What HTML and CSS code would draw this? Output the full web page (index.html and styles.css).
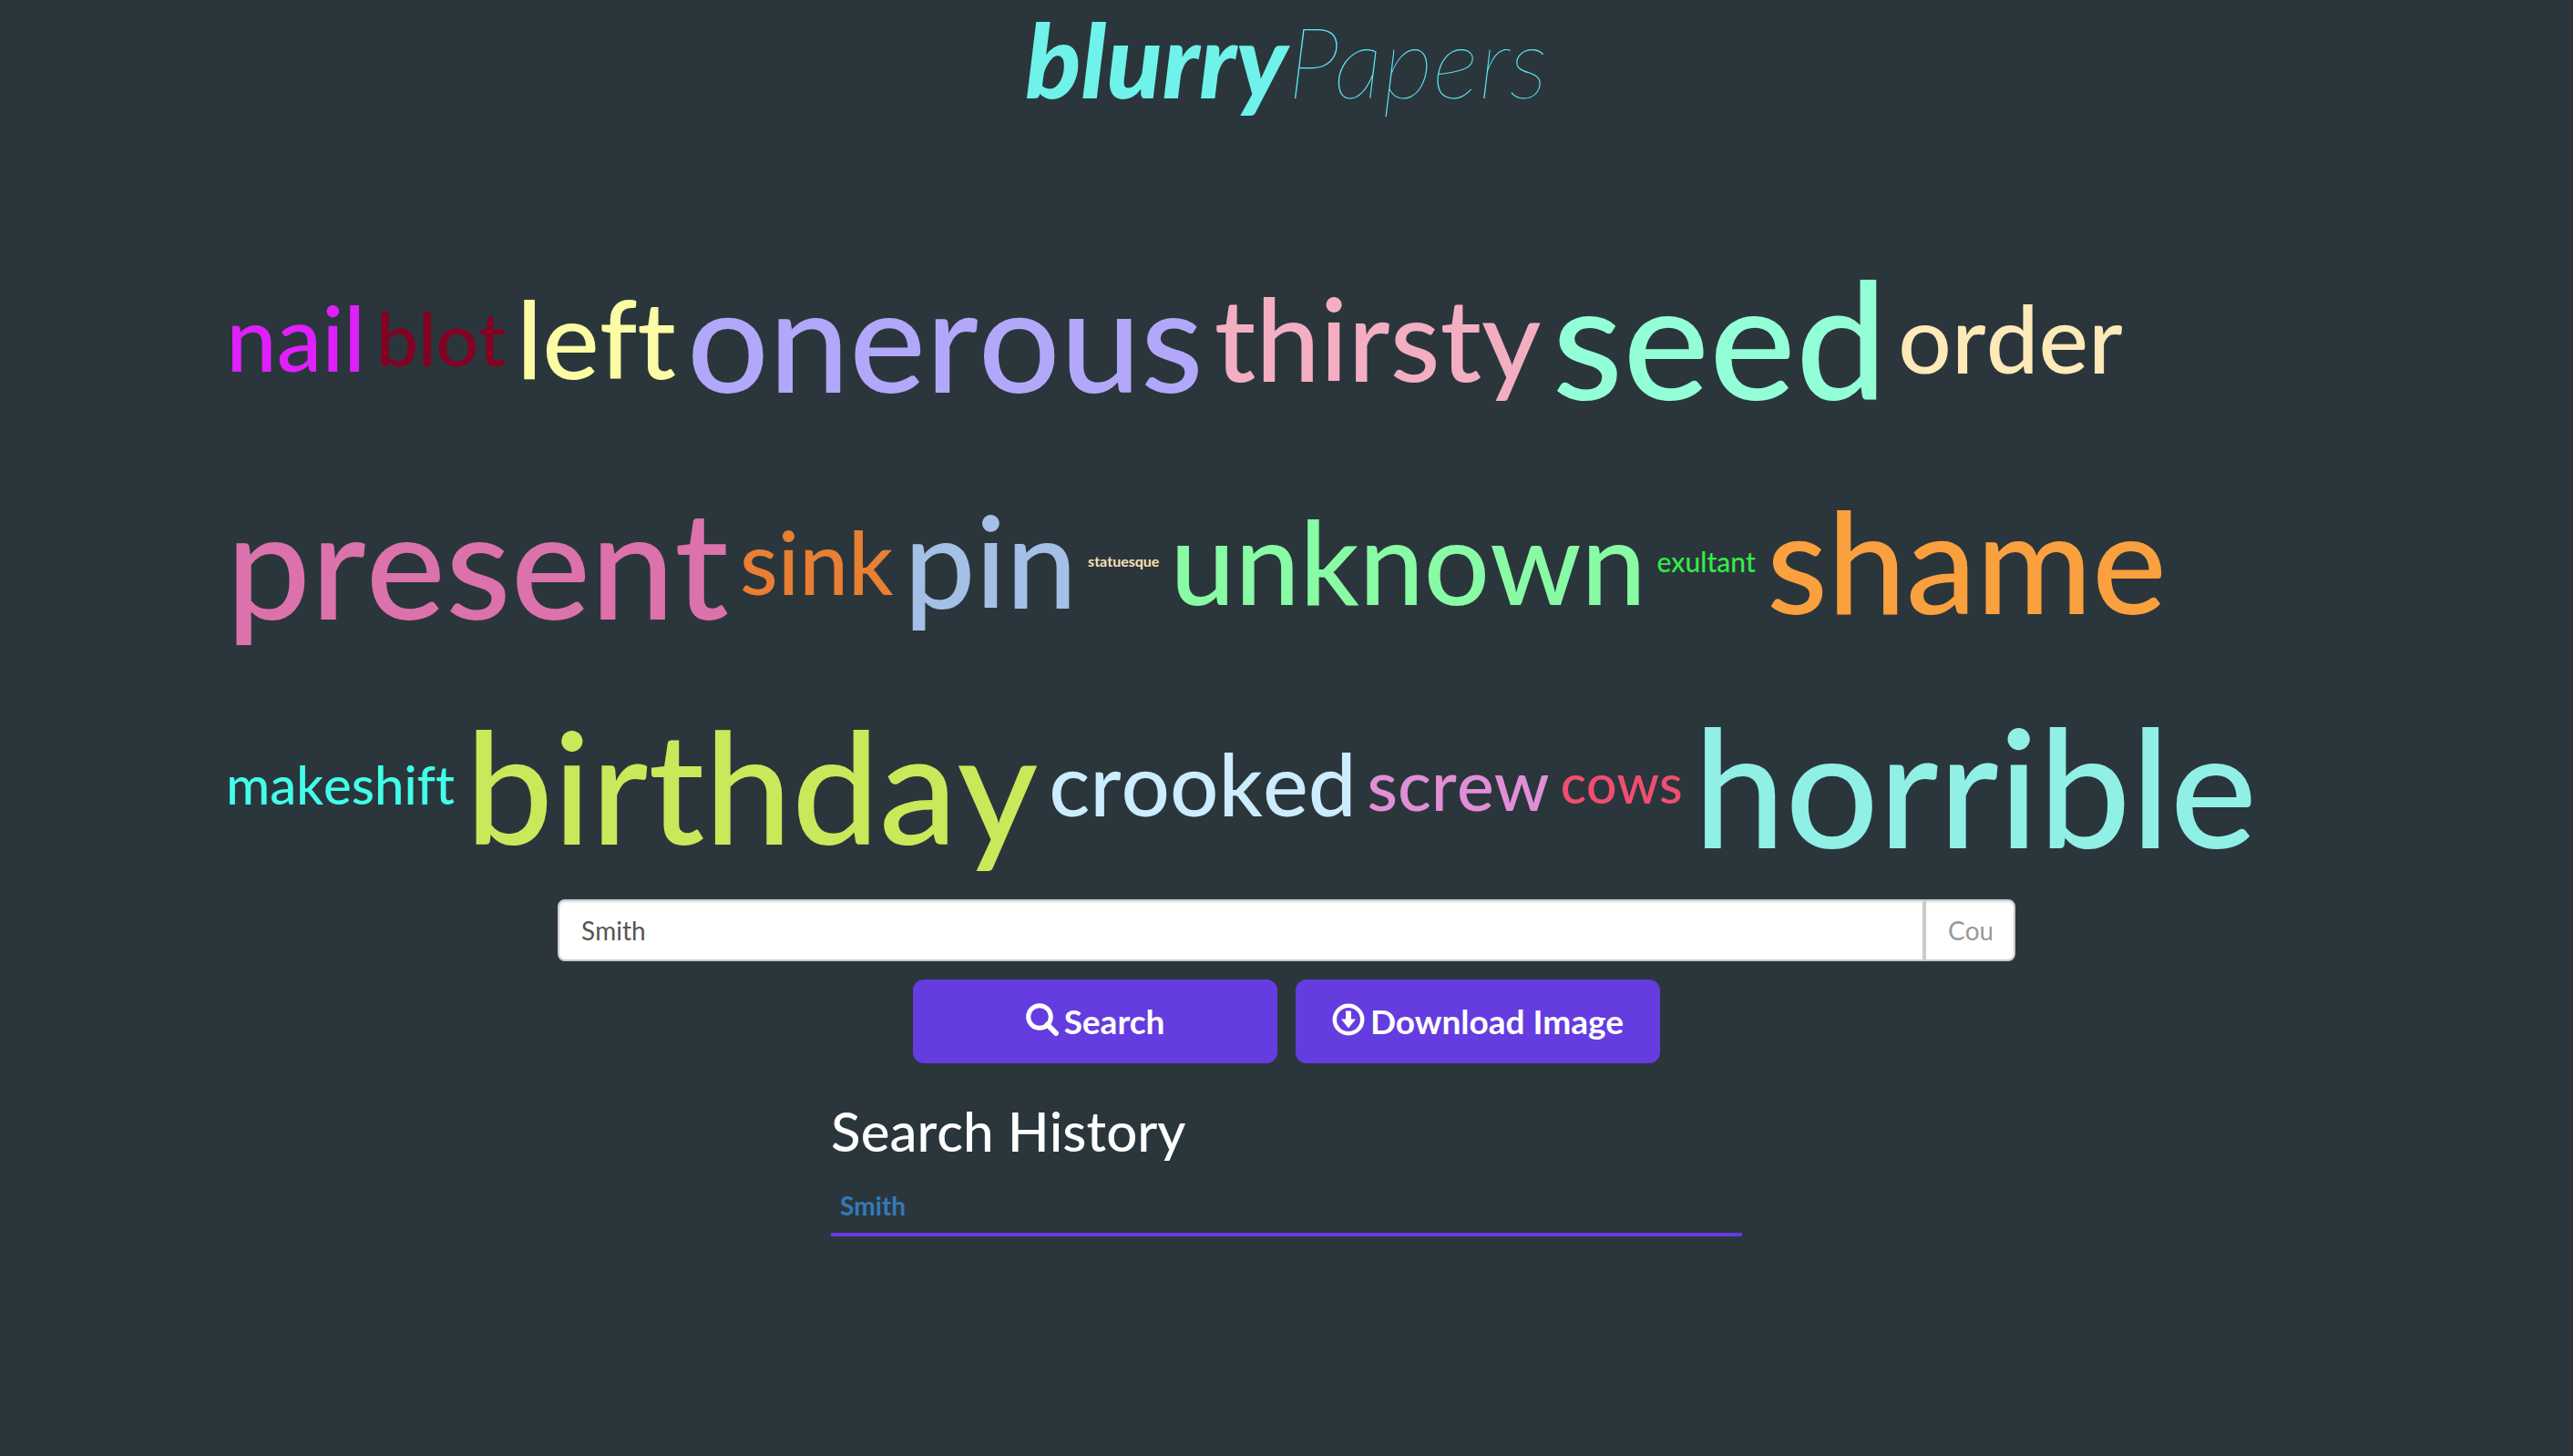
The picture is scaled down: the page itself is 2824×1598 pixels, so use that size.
FILE: index.html
```
<!DOCTYPE html>
<html lang="en">
<head>
<meta charset="utf-8">
<title>blurryPapers</title>
<link rel="stylesheet" href="styles.css">
</head>
<body>
<header class="site-header">
  <h1 class="logo"><span class="logo-bold">blurry</span><span class="logo-thin">Papers</span></h1>
</header>
<main>
  <section class="cloud" aria-label="Word cloud">
    <div class="cloud-row">
      <span style="font-size:99px;color:#df20fd">nail</span>
      <span style="font-size:82px;color:#840022">blot</span>
      <span style="font-size:118px;color:#fcfca4">left</span>
      <span style="font-size:158px;color:#b2a8fa">onerous</span>
      <span style="font-size:126px;color:#f4aec2">thirsty</span>
      <span style="font-size:179px;color:#93ffd6">seed</span>
      <span style="font-size:103px;color:#fdeab8">order</span>
    </div>
    <div class="cloud-row">
      <span style="font-size:165px;color:#dc72ab">present</span>
      <span style="font-size:96px;color:#e87f32">sink</span>
      <span style="font-size:139px;color:#a5c0e6">pin</span>
      <span class="tiny" style="font-size:16px;color:#fde0b4">statuesque</span>
      <span style="font-size:127px;color:#88fba4">unknown</span>
      <span style="font-size:30px;color:#34ea4a">exultant</span>
      <span style="font-size:154px;color:#fba03e">shame</span>
    </div>
    <div class="cloud-row">
      <span style="font-size:58px;color:#42ffea">makeshift</span>
      <span style="font-size:171px;color:#cae95a">birthday</span>
      <span style="font-size:94px;color:#ccedff">crooked</span>
      <span style="font-size:77px;color:#e08fd6">screw</span>
      <span style="font-size:59px;color:#f04e70">cows</span>
      <span style="font-size:180px;color:#90f0e6">horrible</span>
    </div>
  </section>
  <form class="search">
    <div class="fields">
      <input class="field name" type="text" value="Smith" aria-label="Name">
      <input class="field count" type="text" placeholder="Count" aria-label="Count">
    </div>
    <div class="actions">
      <button class="btn" type="button">
        <svg class="icon" viewBox="0 0 36 36" aria-hidden="true"><circle cx="15" cy="15" r="12.3" fill="none" stroke="currentColor" stroke-width="5"/><path d="M23.5 23.5L33 33" stroke="currentColor" stroke-width="6" stroke-linecap="round"/></svg>
        Search
      </button>
      <button class="btn" type="button">
        <svg class="icon" viewBox="0 0 36 36" aria-hidden="true"><circle cx="18" cy="18" r="15.2" fill="none" stroke="currentColor" stroke-width="4.5"/><path d="M15 8.500h6v9h5l-8 10-8-10h5z" fill="currentColor"/></svg>
        Download Image
      </button>
    </div>
  </form>
  <section class="history">
    <h2>Search History</h2>
    <ul>
      <li><a href="#smith">Smith</a></li>
    </ul>
  </section>
</main>
</body>
</html>
```
FILE: styles.css
```
* {
  box-sizing: border-box;
}

body {
  margin: 0;
  background: #2b363c;
  color: #fff;
  font-family: Lato, "Liberation Sans", sans-serif;
  font-size: 28px;
  line-height: 40px;
  font-kerning: none;
  font-variant-ligatures: none;
}

.site-header {
  padding-bottom: 120px;
}

.logo {
  height: 128px;
  margin: 0;
  text-align: center;
  line-height: 128px;
  font-style: italic;
  font-size: 112px;
  font-kerning: normal;
}

.logo-bold {
  font-size: 113px;
  font-weight: 900;
  color: #6ef2ea;
}

.logo-thin {
  font-size: 109px;
  font-weight: 100;
  color: #5ee6f6;
}

.cloud {
  padding-left: calc(8.3333% + 13px);
}

.cloud-row {
  display: flex;
  align-items: center;
  gap: 12px;
  height: 245px;
  font-weight: 500;
  line-height: 1.2;
  white-space: nowrap;
}

.tiny {
  font-weight: 700;
}

.search {
  width: 1600px;
  max-width: 100%;
  margin: 4px auto 0;
}

.fields {
  display: flex;
}

.field {
  height: 68px;
  padding: 12px 24px;
  border: 2px solid #ccc;
  background: #fff;
  box-shadow: inset 0 2px 2px rgba(0, 0, 0, 0.075);
  color: #555;
  font: inherit;
}

.field::placeholder {
  color: #999;
  opacity: 1;
}

.name {
  flex: 1;
  min-width: 0;
  border-radius: 8px 0 0 8px;
}

.count {
  width: 100px;
  border-radius: 0 8px 8px 0;
}

.actions {
  display: flex;
  justify-content: center;
  gap: 20px;
  margin-top: 20px;
}

.btn {
  display: flex;
  align-items: center;
  justify-content: center;
  gap: 6px;
  width: 400px;
  height: 92px;
  padding: 0;
  border: 0;
  border-radius: 12px;
  background: #643cdf;
  color: #fff;
  font: bold 37px/48px Lato, "Liberation Sans", sans-serif;
}

.icon {
  width: 36px;
  height: 36px;
  margin-bottom: 4px;
}

.history {
  width: 1000px;
  max-width: 100%;
  margin: 38px auto 0;
}

.history h2 {
  margin: 0;
  font-size: 60px;
  line-height: 72px;
  font-weight: 500;
}

.history ul {
  margin: 22px 0 0;
  padding: 0;
  list-style: none;
}

.history li {
  padding: 4px 10px 10px;
  border-bottom: 4px solid #643cdf;
}

.history a {
  color: #337ab7;
  font-weight: 700;
  text-decoration: none;
}
```
